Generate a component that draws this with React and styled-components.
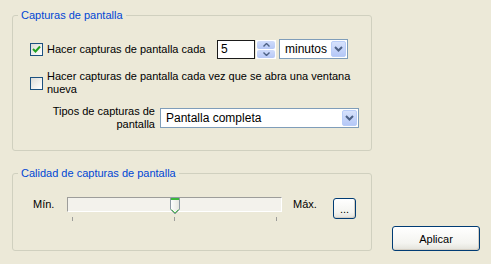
import React from "react"
import styled, { createGlobalStyle } from "styled-components"

const GlobalStyle = createGlobalStyle`
  html, body {
    margin: 0;
    padding: 0;
    background: #ece9d8;
  }
  body {
    font-family: "Liberation Sans", Arial, sans-serif;
    font-size: 11px;
    line-height: 13px;
    color: #000000;
  }
`

const Page = styled.div`
  width: 491px;
  height: 264px;
  padding: 0 0 0 12px;
  box-sizing: border-box;
  overflow: hidden;
`

const Group = styled.fieldset`
  width: 360px;
  box-sizing: border-box;
  margin: ${(p) => p.$top}px 0 0 0;
  padding: ${(p) => p.$pad};
  border: 1px solid #d0d0bf;
  border-radius: 3px;
  min-width: 0;
`

const Legend = styled.legend`
  margin-left: ${(p) => p.$shift}px;
  padding: 0 3px;
  color: #0046d5;
  line-height: 13px;
`

const Stack = styled.div`
  display: flex;
  flex-direction: column;
`

const Row = styled.div`
  display: flex;
  align-items: center;
  margin-top: ${(p) => p.$gap || 0}px;
`

const CheckBox = styled.span`
  flex: none;
  width: 13px;
  height: 13px;
  box-sizing: border-box;
  border: 1px solid #1c5180;
  background: linear-gradient(135deg, #dcdcd7 0%, #f2f2ef 60%, #ffffff 100%);
  display: flex;
  align-items: center;
  justify-content: center;
`

const CheckText = styled.span`
  margin-left: 4px;
  width: ${(p) => p.$w || "auto"};
`

const NumberBox = styled.div`
  width: 38px;
  height: 19px;
  box-sizing: border-box;
  border: 1px solid #1b1b1b;
  background: #ffffff;
  padding: 2px 3px;
  font-size: 12px;
`

const SpinButtons = styled.div`
  display: flex;
  flex-direction: column;
  width: 20px;
  height: 19px;
  margin-left: 1px;
  box-sizing: border-box;
  border: 1px solid #ffffff;
  background: #ffffff;
  gap: 1px;
`

const SpinHalf = styled.div`
  flex: 1;
  background: linear-gradient(#cfdcfb, #b6c8f6);
  border-radius: 2px;
  display: flex;
  align-items: center;
  justify-content: center;
`

const Combo = styled.div`
  width: ${(p) => p.$w}px;
  height: 20px;
  box-sizing: border-box;
  border: 1px solid #7f9db9;
  background: #ffffff;
  display: flex;
  align-items: center;
  padding: 1px;
  margin-left: ${(p) => p.$ml || 0}px;
`

const ComboText = styled.span`
  flex: 1;
  padding-left: 4px;
  font-size: 12px;
`

const ComboButton = styled.div`
  width: 15px;
  height: 16px;
  box-sizing: border-box;
  border: 1px solid #b9cdf8;
  border-radius: 2px;
  background: linear-gradient(#d7e2fc, #b5c8f7);
  display: flex;
  align-items: center;
  justify-content: center;
`

const SideLabel = styled.span`
  width: 125px;
  text-align: right;
  flex: none;
`

const SliderRow = styled.div`
  display: flex;
  align-items: flex-start;
`

const MinLabel = styled.span`
  width: 34px;
  flex: none;
  padding-top: 1px;
`

const MaxLabel = styled.span`
  margin-left: 11px;
  width: 40px;
  flex: none;
  padding-top: 1px;
`

const Slider = styled.div`
  width: 215px;
  flex: none;
  display: flex;
  flex-direction: column;
`

const Track = styled.div`
  position: relative;
  height: 15px;
  box-sizing: border-box;
  border-top: 1px solid #9d9d9a;
  border-left: 1px solid #9d9d9a;
  border-bottom: 1px solid #ffffff;
  border-right: 1px solid #ffffff;
  background: #f3f2ec;
`

const Thumb = styled.svg`
  position: absolute;
  top: -1px;
`

const Ticks = styled.div`
  display: flex;
  justify-content: space-between;
  padding: 0 5px;
  margin-top: 5px;
`

const Tick = styled.span`
  width: 1px;
  height: 4px;
  background: #9d9d9a;
`

const Button = styled.button`
  font-family: inherit;
  font-size: 11px;
  color: #000000;
  width: ${(p) => p.$w}px;
  height: ${(p) => p.$h}px;
  box-sizing: border-box;
  border: 1px solid #003c74;
  border-radius: 3px;
  background: linear-gradient(#ffffff 0%, #f4f4f0 70%, #e3e2da 100%);
  box-shadow: inset -1px -1px 0 #d6d0c5;
  padding: 0;
  margin-left: ${(p) => p.$ml || 0}px;
  margin-top: ${(p) => p.$mt || 0}px;
  flex: none;
`

const Bottom = styled.div`
  display: flex;
  align-items: flex-end;
`

const Check = () => (
  <svg width="9" height="9" viewBox="0 0 9 9">
    <path d="M1 4 L3.5 6.5 L8 1.5" fill="none" stroke="#21a121" strokeWidth="2" />
  </svg>
)

const Arrow = ({ up }) => (
  <svg width="7" height="4" viewBox="0 0 7 4">
    <path
      d={up ? "M0.5 3.5 L3.5 0.5 L6.5 3.5" : "M0.5 0.5 L3.5 3.5 L6.5 0.5"}
      fill="none"
      stroke="#4d6185"
      strokeWidth="1.4"
    />
  </svg>
)

const Chevron = () => (
  <svg width="9" height="6" viewBox="0 0 9 6">
    <path d="M1 1 L4.5 4.5 L8 1" fill="none" stroke="#4d6185" strokeWidth="2" />
  </svg>
)

const ThumbIcon = ({ left }) => (
  <Thumb width="10" height="18" viewBox="0 0 10 18" style={{ left }}>
    <defs>
      <linearGradient id="tg" x1="0" y1="0" x2="1" y2="0">
        <stop offset="0" stopColor="#ffffff" />
        <stop offset="1" stopColor="#e6e6e0" />
      </linearGradient>
    </defs>
    <path d="M0.5 0.5 H9.5 V12.5 L5 17 L0.5 12.5 Z" fill="url(#tg)" stroke="#8e9aa4" />
    <rect x="1" y="1" width="8" height="2" fill="#3cb83c" />
    <path d="M1.5 12.5 L5 16 L8.5 12.5" fill="none" stroke="#4fbf4f" />
  </Thumb>
)

export default function App() {
  // slider value 0..1; ticks span 205px starting 5px into the track
  const quality = 0.5
  const thumbLeft = 5 + quality * 205 - 6

  return (
    <>
      <GlobalStyle />
      <Page>
        <Group $top={9} $pad="17px 0 19px 17px">
          <Legend $shift={-12}>Capturas de pantalla</Legend>
          <Stack>
            <Row>
              <CheckBox>
                <Check />
              </CheckBox>
              <CheckText $w="170px">Hacer capturas de pantalla cada</CheckText>
              <NumberBox>5</NumberBox>
              <SpinButtons>
                <SpinHalf>
                  <Arrow up />
                </SpinHalf>
                <SpinHalf>
                  <Arrow />
                </SpinHalf>
              </SpinButtons>
              <Combo $w={69} $ml={3}>
                <ComboText>minutos</ComboText>
                <ComboButton>
                  <Chevron />
                </ComboButton>
              </Combo>
            </Row>
            <Row $gap={11}>
              <CheckBox />
              <CheckText $w="318px">
                Hacer capturas de pantalla cada vez que se abra una ventana nueva
              </CheckText>
            </Row>
            <Row $gap={9}>
              <SideLabel>Tipos de capturas de pantalla</SideLabel>
              <Combo $w={199} $ml={5}>
                <ComboText>Pantalla completa</ComboText>
                <ComboButton>
                  <Chevron />
                </ComboButton>
              </Combo>
            </Row>
          </Stack>
        </Group>
        <Bottom>
          <Group $top={16} $pad="17px 0 29px 20px">
            <Legend $shift={-15}>Calidad de capturas de pantalla</Legend>
            <SliderRow>
              <MinLabel>Mín.</MinLabel>
              <Slider>
                <Track>
                  <ThumbIcon left={thumbLeft} />
                </Track>
                <Ticks>
                  <Tick />
                  <Tick />
                  <Tick />
                </Ticks>
              </Slider>
              <MaxLabel>Máx.</MaxLabel>
              <Button $w={23} $h={21} $mt={1}>
                ...
              </Button>
            </SliderRow>
          </Group>
          <Button $w={88} $h={25} $ml={20}>
            Aplicar
          </Button>
        </Bottom>
      </Page>
    </>
  )
}
